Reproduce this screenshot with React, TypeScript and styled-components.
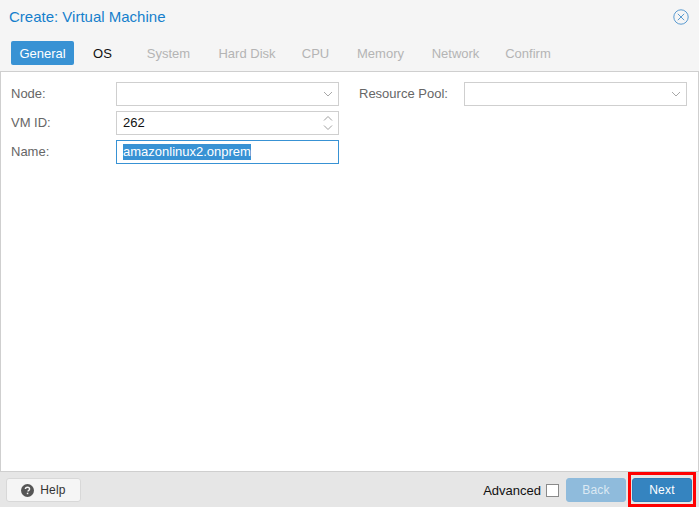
import React from "react";
import styled, { createGlobalStyle } from "styled-components";

const Global = createGlobalStyle`
  html, body { margin: 0; padding: 0; width: 699px; height: 507px; overflow: hidden; background: #f5f5f5; }
  * { box-sizing: border-box; }
`;

const Window = styled.div`
  width: 699px;
  height: 507px;
  display: flex;
  flex-direction: column;
  background: #f5f5f5;
  font-family: "Liberation Sans", Arial, sans-serif;
  font-size: 13px;
`;

const Header = styled.header`
  height: 41px;
  flex: none;
  display: flex;
  align-items: center;
  justify-content: space-between;
  padding: 0 10px 7px 9px;
`;

const Title = styled.h1`
  margin: 0;
  font-size: 15px;
  font-weight: 400;
  line-height: 20px;
  color: #157fcc;
`;

const CloseIcon = styled.svg`
  width: 16px;
  height: 16px;
  display: block;
`;

const TabBar = styled.nav`
  height: 30px;
  flex: none;
  display: flex;
  align-items: flex-start;
  padding-left: 11px;
`;

const Tab = styled.div<{ $state: "active" | "enabled" | "disabled"; $w: number }>`
  width: ${(p) => p.$w}px;
  height: 24px;
  line-height: 25px;
  text-align: center;
  border-radius: 2px;
  background: ${(p) => (p.$state === "active" ? "#3892d4" : "transparent")};
  color: ${(p) => (p.$state === "active" ? "#fff" : p.$state === "enabled" ? "#111" : "#b4b4b4")};
`;

const Panel = styled.main`
  flex: 1;
  background: #fff;
  border: 1px solid #cfcfcf;
  padding: 10px 11px 0 10px;
  display: grid;
  grid-template-columns: 328px 328px;
  column-gap: 20px;
  align-content: start;
`;

const Column = styled.div`
  display: flex;
  flex-direction: column;
  gap: 5px;
`;

const Row = styled.div<{ $label: number }>`
  display: grid;
  grid-template-columns: ${(p) => p.$label}px 1fr;
  height: 24px;
  align-items: center;
`;

const Label = styled.label`
  color: #666;
  line-height: 24px;
`;

const Field = styled.div<{ $focus?: boolean }>`
  height: 24px;
  background: #fff;
  border: 1px solid ${(p) => (p.$focus ? "#3892d4" : "#cfcfcf")};
  display: flex;
  align-items: center;
  justify-content: space-between;
  padding: 0 6px;
  color: #111;
  line-height: 22px;
`;

const Selected = styled.span`
  background: #3892d4;
  color: #fff;
  line-height: 16px;
  display: block;
`;

const Glyph = styled.svg`
  display: block;
  flex: none;
  margin-right: -1px;
`;

const Footer = styled.footer`
  height: 35px;
  flex: none;
  background: #e6e6e6;
  display: flex;
  align-items: center;
  padding: 1px 7px 0 6px;
`;

const HelpButton = styled.button`
  width: 75px;
  height: 24px;
  display: flex;
  align-items: center;
  justify-content: center;
  gap: 6px;
  padding: 0;
  border: 1px solid #d8d8d8;
  border-radius: 3px;
  background: #f5f5f5;
  font: inherit;
  font-size: 12px;
  color: #333;
  letter-spacing: 0.2px;
`;

const Advanced = styled.label`
  margin-left: auto;
  display: flex;
  align-items: center;
  gap: 5px;
  color: #111;
  margin-right: 7px;
`;

const Check = styled.span`
  width: 13px;
  height: 13px;
  background: #fff;
  border: 1px solid #8a8a8a;
  display: block;
`;

const PrimaryButton = styled.button<{ $disabled?: boolean }>`
  width: 60px;
  height: 24px;
  padding: 0;
  border: 1px solid ${(p) => (p.$disabled ? "#8fbbdc" : "#2f7ab5")};
  border-radius: 3px;
  background: ${(p) => (p.$disabled ? "#8fbbdc" : "#3584c0")};
  color: ${(p) => (p.$disabled ? "#dce9f3" : "#fff")};
  font: inherit;
  font-size: 12px;
  letter-spacing: 0.2px;
`;

const Highlight = styled.div`
  position: relative;
  margin-left: 6px;
  &::after {
    content: "";
    position: absolute;
    left: -4px;
    right: -4px;
    top: -6px;
    bottom: -5px;
    border: 3px solid #f00;
    pointer-events: none;
  }
`;

const Chevron = () => (
  <Glyph width="10" height="6" viewBox="0 0 10 6" fill="none" stroke="#a8a8a8" strokeWidth="1">
    <path d="M1 1l4 4 4-4" />
  </Glyph>
);

const Spinner = () => (
  <Glyph width="10" height="16" viewBox="0 0 10 16" fill="none" stroke="#a0a0a0" strokeWidth="1">
    <path d="M1 5.5l4-4 4 4" />
    <path d="M1 10.5l4 4 4-4" />
  </Glyph>
);

const tabs: { name: string; w: number; state: "active" | "enabled" | "disabled" }[] = [
  { name: "General", w: 63, state: "active" },
  { name: "OS", w: 57, state: "enabled" },
  { name: "System", w: 75, state: "disabled" },
  { name: "Hard Disk", w: 82, state: "disabled" },
  { name: "CPU", w: 55, state: "disabled" },
  { name: "Memory", w: 75, state: "disabled" },
  { name: "Network", w: 75, state: "disabled" },
  { name: "Confirm", w: 70, state: "disabled" },
];

export default function App() {
  return (
    <Window>
      <Global />
      <Header>
        <Title>Create: Virtual Machine</Title>
        <CloseIcon viewBox="0 0 16 16" fill="none" stroke="#5b9bd0" strokeWidth="1">
          <circle cx="8" cy="8" r="7.2" />
          <path d="M4.8 4.8l6.4 6.4M11.2 4.8l-6.4 6.4" />
        </CloseIcon>
      </Header>
      <TabBar>
        {tabs.map((t) => (
          <Tab key={t.name} $state={t.state} $w={t.w}>
            {t.name}
          </Tab>
        ))}
      </TabBar>
      <Panel>
        <Column>
          <Row $label={105}>
            <Label>Node:</Label>
            <Field>
              <span />
              <Chevron />
            </Field>
          </Row>
          <Row $label={105}>
            <Label>VM ID:</Label>
            <Field>
              <span>262</span>
              <Spinner />
            </Field>
          </Row>
          <Row $label={105}>
            <Label>Name:</Label>
            <Field $focus>
              <Selected>amazonlinux2.onprem</Selected>
            </Field>
          </Row>
        </Column>
        <Column>
          <Row $label={105}>
            <Label>Resource Pool:</Label>
            <Field>
              <span />
              <Chevron />
            </Field>
          </Row>
        </Column>
      </Panel>
      <Footer>
        <HelpButton>
          <svg width="13" height="13" viewBox="0 0 13 13">
            <circle cx="6.5" cy="6.5" r="6.5" fill="#555" />
            <path d="M4.4 5.1c0-1.3 1-1.9 2.1-1.9s2.1.6 2.1 1.8c0 1.4-1.6 1.3-1.6 2.6" fill="none" stroke="#f5f5f5" strokeWidth="1.4" />
            <rect x="5.8" y="8.7" width="1.5" height="1.5" fill="#f5f5f5" />
          </svg>
          Help
        </HelpButton>
        <Advanced>
          Advanced
          <Check />
        </Advanced>
        <PrimaryButton $disabled>Back</PrimaryButton>
        <Highlight>
          <PrimaryButton>Next</PrimaryButton>
        </Highlight>
      </Footer>
    </Window>
  );
}
